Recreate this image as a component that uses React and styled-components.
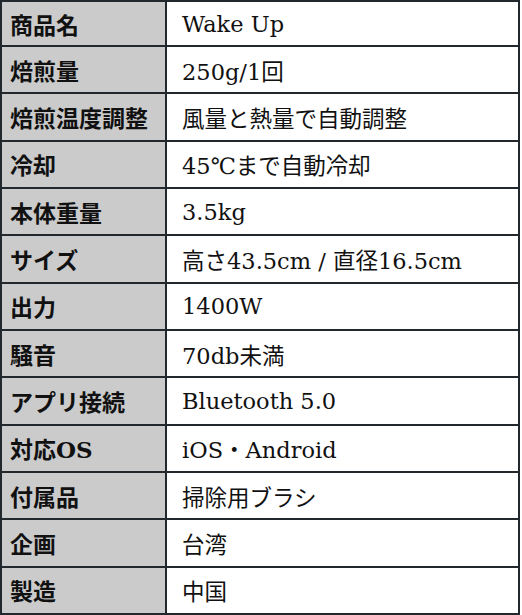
import React from 'react';
import styled, {createGlobalStyle} from 'styled-components';

const specs = [
    ['商品名', 'Wake Up'],
    ['焙煎量', '250g/1回'],
    ['焙煎温度調整', '風量と熱量で自動調整'],
    ['冷却', '45℃まで自動冷却'],
    ['本体重量', '3.5kg'],
    ['サイズ', '高さ43.5cm / 直径16.5cm'],
    ['出力', '1400W'],
    ['騒音', '70db未満'],
    ['アプリ接続', 'Bluetooth 5.0'],
    ['対応OS', 'iOS・Android'],
    ['付属品', '掃除用ブラシ'],
    ['企画', '台湾'],
    ['製造', '中国']
];

const GlobalStyle = createGlobalStyle`
    html, body
    {
        margin: 0;
        padding: 0;
        background: #ffffff;
    }
`;

const Table = styled.div`
    width: 520px;
    height: 615px;
    box-sizing: border-box;
    display: grid;
    grid-template-columns: 163px 1fr;
    grid-template-rows: 43fr repeat(12, 45.3fr);
    gap: 2px;
    padding: 2px;
    background-color: #23282d;
    font-family: "DejaVu Serif", "Noto Sans CJK JP", serif;
    color: #111111;
`;

const Label = styled.div`
    display: flex;
    align-items: center;
    padding-left: 8px;
    background-color: #cbcbcb;
    font-size: 23px;
    font-weight: bold;
    white-space: nowrap;
`;

const Value = styled.div`
    display: flex;
    align-items: center;
    padding-left: 15px;
    background-color: #ffffff;
    font-size: 22.5px;
    white-space: nowrap;
`;

export default function App()
{
    return (
        <>
            <GlobalStyle/>
            <Table>
                {specs.map(([label, value]) => (
                    <React.Fragment key={label}>
                        <Label>{label}</Label>
                        <Value>{value}</Value>
                    </React.Fragment>
                ))}
            </Table>
        </>
    );
}
